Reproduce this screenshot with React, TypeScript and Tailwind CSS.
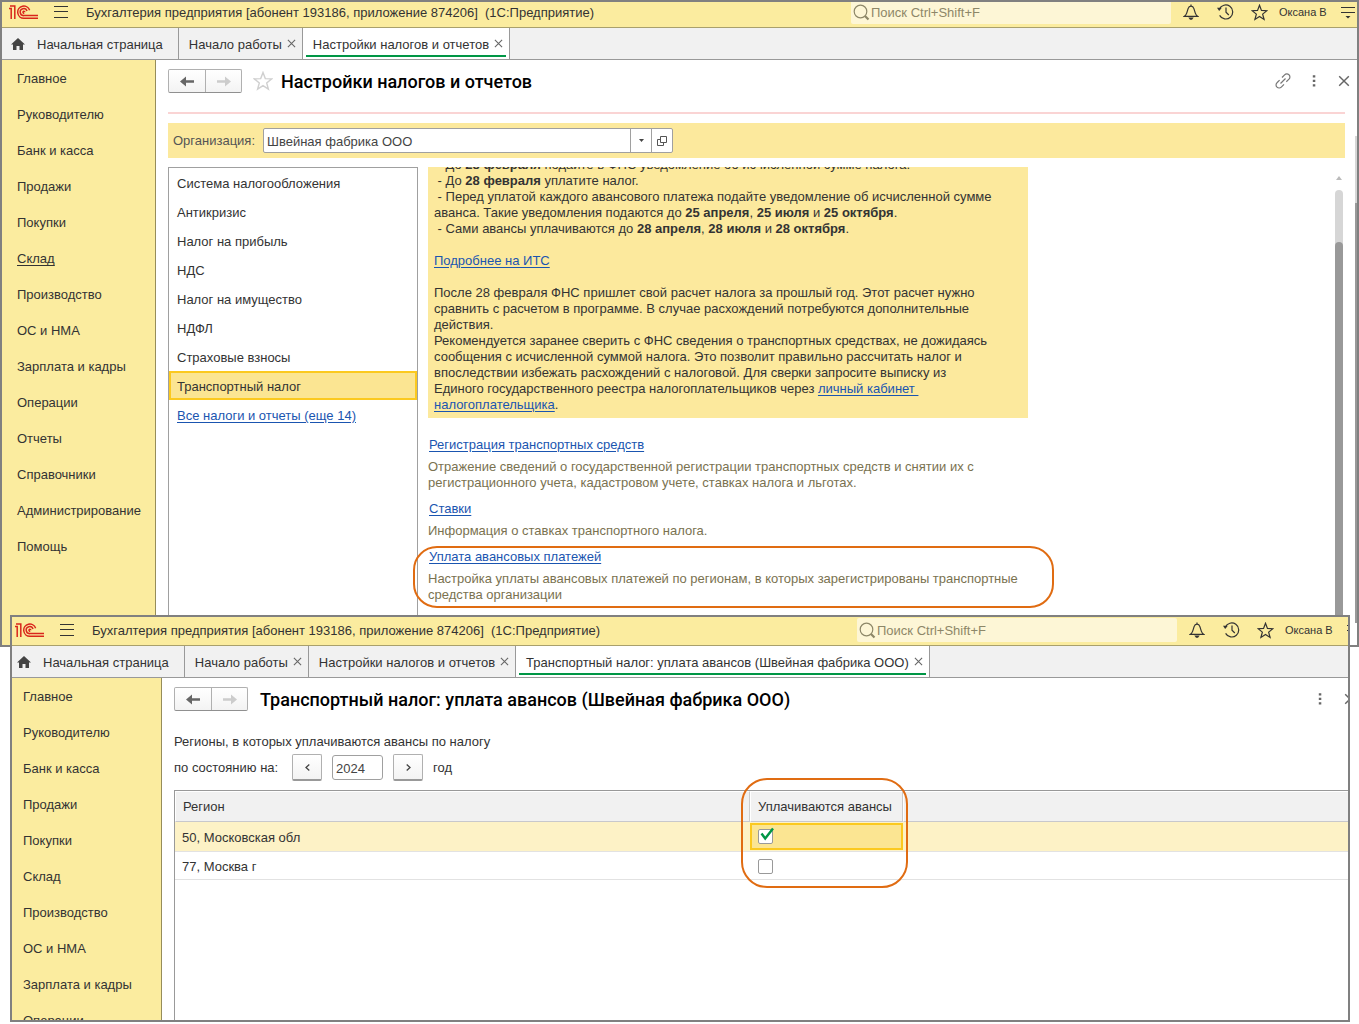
import { useState } from 'react'
import type { ReactNode } from 'react'

const sections = [
  'Главное',
  'Руководителю',
  'Банк и касса',
  'Продажи',
  'Покупки',
  'Склад',
  'Производство',
  'ОС и НМА',
  'Зарплата и кадры',
  'Операции',
  'Отчеты',
  'Справочники',
  'Администрирование',
  'Помощь',
]

const taxes = [
  'Система налогообложения',
  'Антикризис',
  'Налог на прибыль',
  'НДС',
  'Налог на имущество',
  'НДФЛ',
  'Страховые взносы',
  'Транспортный налог',
]

function Logo() {
  return (
    <svg width="30" height="15" viewBox="0 0 30 15" fill="none" stroke="#d9261c" strokeWidth="1.5">
      <path d="M0 3.6h2.2V14M1 1h4.8v13" />
      <path d="M20.6 5.2A6.1 6.1 0 1 0 15 13.3h14" />
      <path d="M18 6A3.5 3.5 0 1 0 15 10.6h14" />
      <path d="M15.8 7.2a.9.9 0 1 0-.6.9" />
    </svg>
  )
}

function BellIcon() {
  return (
    <svg width="16" height="16" viewBox="0 0 16 16" fill="none" stroke="#333" strokeWidth="1.2">
      <path d="M8 .5v1.8M1.2 12.4h13.6c-1.2-.9-2-1.900-2.500-3.300L10.900 4.600C10.400 3 9.400 2.200 8 2.200S5.600 3 5.100 4.600L3.700 9.100c-.5 1.400-1.300 2.400-2.500 3.300z" />
      <path d="M5.300 13.600h5.400L9 15.700H7z" fill="#333" stroke="none" />
    </svg>
  )
}

function HistoryIcon() {
  return (
    <svg width="17" height="16" viewBox="0 0 17 16" fill="none" stroke="#333" strokeWidth="1.2">
      <path d="M2.300 5.200A7 7 0 1 1 2.600 11.400" />
      <path d="M9 3.500v4.700l2.800 2.800" />
      <path d="M0 3.800h4.800L2.200 7z" fill="#333" stroke="none" />
    </svg>
  )
}

function StarIcon({ color, size }: { color: string; size: number }) {
  return (
    <svg width={size} height={size} viewBox="0 0 20 20" fill="none" stroke={color} strokeWidth="1.400">
      <path d="M10 1.500l2.300 6.100 6.400.3-5 4 1.700 6.300-5.400-3.600-5.400 3.600 1.700-6.300-5-4 6.400-.3z" />
    </svg>
  )
}

function CrossIcon({ size }: { size: number }) {
  return (
    <svg width={size} height={size} viewBox="0 0 10 10" stroke="#666" strokeWidth="1.200">
      <path d="M1 1l8 8M9 1L1 9" />
    </svg>
  )
}

function ArrowIcon({ color, flip }: { color: string; flip?: boolean }) {
  return (
    <svg width="14" height="11" viewBox="0 0 14 11" fill={color} className={flip ? 'rotate-180' : ''}>
      <path d="M0 5.500L6 .5v3.700h8v2.600H6v3.700z" />
    </svg>
  )
}

function TitleBar({ searchId }: { searchId: string }) {
  return (
    <header className="flex h-[29px] shrink-0 items-center border-b border-[#a9a06c] bg-[#fbec9f] pr-0.5 pb-0.5 pl-[7px]">
      <Logo />
      <button aria-label="Меню" className="ml-[15px]">
        <svg width="14" height="12" viewBox="0 0 14 12" stroke="#333">
          <path d="M0 .5h14M0 5.500h14M0 11.500h14" />
        </svg>
      </button>
      <h2 className="ml-[18px] pt-0.5 whitespace-pre">
        Бухгалтерия предприятия [абонент 193186, приложение 874206]{'  '}(1С:Предприятие)
      </h2>
      <label htmlFor={searchId} className="ml-auto flex h-6 w-80 items-center rounded-xs bg-[#fdf6d6] pl-0.5">
        <svg width="17" height="17" viewBox="0 0 17 17" fill="none" stroke="#8d8768" strokeWidth="1.200">
          <circle cx="7.500" cy="7.500" r="6.300" />
          <path d="M12 12l3.500 3.500" strokeWidth="2.200" />
        </svg>
        <input
          id={searchId}
          placeholder="Поиск Ctrl+Shift+F"
          className="min-w-0 flex-1 bg-transparent pt-0.5 pl-px outline-none placeholder:text-[#8d8768]"
        />
      </label>
      <button aria-label="Уведомления" className="ml-3">
        <BellIcon />
      </button>
      <button aria-label="История" className="ml-[18px]">
        <HistoryIcon />
      </button>
      <button aria-label="Избранное" className="ml-[17px]">
        <StarIcon color="#333" size={17} />
      </button>
      <button className="ml-[11px] w-[50px] text-left text-[11px] whitespace-nowrap">Оксана В</button>
      <button aria-label="Сервис" className="ml-3">
        <svg width="14" height="13" viewBox="0 0 14 13" stroke="#333">
          <path d="M0 1.500h14M0 6.500h14" />
          <path d="M4.500 10h5L7 12.500z" fill="#333" stroke="none" />
        </svg>
      </button>
    </header>
  )
}

function Tabs({ items }: { items: string[] }) {
  return (
    <nav className="flex h-8 shrink-0 border-b border-[#999] bg-[#f1f1f1]">
      <a href="#home" className="flex items-center gap-3 border-r border-[#999] pr-[15px] pl-[9px]">
        <svg width="14" height="12" viewBox="0 0 14 12" fill="#444">
          <path d="M7 0L0 6.500h2V12h3.500V8h3v4H12V6.500h2z" />
        </svg>
        <span className="pt-0.5">Начальная страница</span>
      </a>
      {items.map((item, i) => {
        const active = i === items.length - 1
        return (
          <div
            key={item}
            className={`relative flex items-center gap-[5px] border-r border-[#999] pr-1.5 pl-2.5 ${active ? 'bg-white' : ''}`}
          >
            <a href="#tab" className="pt-0.5 whitespace-nowrap">{item}</a>
            <button aria-label="Закрыть вкладку">
              <CrossIcon size={9} />
            </button>
            {active && <span className="absolute inset-x-[3px] bottom-[2px] h-0.5 bg-[#009646]" />}
          </div>
        )
      })}
    </nav>
  )
}

function Sidebar({ current }: { current?: string }) {
  return (
    <nav className="w-[154px] shrink-0 border-r border-[#968d5a] bg-[#fbec9f]">
      {sections.map((s) => (
        <a key={s} href="#section" className={`flex h-9 items-center pt-0.5 pl-[15px] ${s === current ? 'underline underline-offset-2' : ''}`}>
          {s}
        </a>
      ))}
    </nav>
  )
}

function PageHeader({ title, star, link }: { title: string; star?: boolean; link?: boolean }) {
  return (
    <div className="flex h-6 items-center">
      <div className="flex h-6 shrink-0 rounded-xs border border-[#b0b0b0] border-b-[#909090] bg-linear-to-b from-white to-[#f3f3f3]">
        <button aria-label="Назад" className="flex w-9 items-center justify-center">
          <ArrowIcon color="#666" />
        </button>
        <button aria-label="Вперед" className="flex w-9 items-center justify-center border-l border-[#b0b0b0]">
          <ArrowIcon color="#ccc" flip />
        </button>
      </div>
      {star && (
        <button aria-label="В избранное" className="-mr-1 ml-[11px]">
          <StarIcon color="#d0d0d0" size={20} />
        </button>
      )}
      <h1 className="ml-3 font-[Roboto,'Liberation_Sans',sans-serif] text-[18px] font-medium whitespace-nowrap text-black">{title}</h1>
      <div className="ml-auto flex items-center">
        {link && (
          <button aria-label="Получить ссылку" className="mr-[21px]">
            <svg width="16" height="16" viewBox="0 0 16 16" fill="none" stroke="#777" strokeWidth="1.200">
              <path d="M7 4.500l2.600-2.700a3 3 0 0 1 4.400 0 3 3 0 0 1 0 4.300l-2.700 2.600" />
              <path d="M9 11.300l-2.700 2.800a3 3 0 0 1-4.300 0 3 3 0 0 1 0-4.400l2.600-2.600M5.500 10.500l5-5" />
            </svg>
          </button>
        )}
        <button aria-label="Еще" className="mr-[22px]">
          <svg width="4" height="12" viewBox="0 0 4 12" fill="#666">
            <path d="M.8.3h2.500v2.300H.8zM.8 4.800h2.500v2.300H.8zM.8 9.300h2.500v2.300H.8z" />
          </svg>
        </button>
        <button aria-label="Закрыть" className="-mr-[5px]">
          <CrossIcon size={12} />
        </button>
      </div>
    </div>
  )
}

function Setting({ title, children, marked }: { title: string; children: ReactNode; marked?: boolean }) {
  return (
    <div className="relative mb-2.5">
      <a href="#setting" className="ml-px text-[#1a55b0] underline underline-offset-2">{title}</a>
      <p className="mt-1.5 text-[#7a7250]">{children}</p>
      {marked && (
        <span className="pointer-events-none absolute -top-[3px] -right-[26px] -bottom-[5px] -left-[15px] rounded-3xl border-2 border-[#e06c12]" />
      )}
    </div>
  )
}

function Link({ children }: { children: ReactNode }) {
  return <a href="#link" className="text-[#1a55b0] underline underline-offset-2">{children}</a>
}

function TaxSettings() {
  const [tax, setTax] = useState('Транспортный налог')
  const [org, setOrg] = useState('Швейная фабрика ООО')

  return (
    <main className="relative flex min-w-0 flex-1 flex-col px-3 pt-[9px]">
      <PageHeader title="Настройки налогов и отчетов" star link />
      <div className="mt-[19px] h-0.5 shrink-0 bg-[#fad4d4]" />

      <div className="mt-[9px] flex h-[35px] shrink-0 items-center bg-[#fce99d] pl-[5px]">
        <label htmlFor="org" className="w-[90px] text-[#555]">Организация:</label>
        <div className="flex h-[25px] w-[410px] rounded-xs border border-[#a0a0a0] bg-white">
          <input
            id="org"
            value={org}
            onChange={(e) => setOrg(e.target.value)}
            className="min-w-0 flex-1 pt-0.5 pl-[3px] text-[#444] outline-none"
          />
          <button aria-label="Выбрать" className="flex w-[21px] items-center justify-center border-l border-[#a0a0a0]">
            <svg width="5" height="3" viewBox="0 0 5 3" fill="#444">
              <path d="M0 0h5L2.500 3z" />
            </svg>
          </button>
          <button aria-label="Открыть" className="flex w-[21px] items-center justify-center border-l border-[#a0a0a0]">
            <svg width="10" height="10" viewBox="0 0 10 10" fill="none" stroke="#555">
              <path d="M3.500.5h6v6h-6zM3 3.500H.5v6h6V7" />
            </svg>
          </button>
        </div>
      </div>

      <div className="mt-[9px] flex min-h-0 flex-1">
        <div className="w-[250px] shrink-0 border border-b-0 border-[#a0a0a0]">
          {taxes.map((t) => (
            <button
              key={t}
              onClick={() => setTax(t)}
              className={`flex h-[29px] w-full items-center border-2 pt-0.5 pl-1.5 ${t === tax ? 'border-[#fbc91f] bg-[#fbe592]' : 'border-transparent'}`}
            >
              {t}
            </button>
          ))}
          <div className="flex h-[29px] items-center pt-0.5 pl-2">
            <Link>Все налоги и отчеты (еще 14)</Link>
          </div>
        </div>

        <div className="ml-2.5 w-[600px] leading-4">
          <div className="mb-[19px] flex h-[251px] flex-col justify-end overflow-hidden bg-[#fce99d] pr-6 pb-[5px] pl-1.5">
            <div className="shrink-0 whitespace-pre">
              <p>{' - До '}<b>28 февраля</b> подайте в ФНС уведомление об исчисленной сумме налога.</p>
              <p>{' - До '}<b>28 февраля</b> уплатите налог.</p>
              <p>{' - Перед уплатой каждого авансового платежа подайте уведомление об исчисленной сумме'}</p>
              <p>аванса. Такие уведомления подаются до <b>25 апреля</b>, <b>25 июля</b> и <b>25 октября</b>.</p>
              <p>{' - Сами авансы уплачиваются до '}<b>28 апреля</b>, <b>28 июля</b> и <b>28 октября</b>.</p>
              <p className="my-4"><Link>Подробнее на ИТС</Link></p>
              <p>После 28 февраля ФНС пришлет свой расчет налога за прошлый год. Этот расчет нужно</p>
              <p>сравнить с расчетом в программе. В случае расхождений потребуются дополнительные</p>
              <p>действия.</p>
              <p>Рекомендуется заранее сверить с ФНС сведения о транспортных средствах, не дожидаясь</p>
              <p>сообщения с исчисленной суммой налога. Это позволит правильно рассчитать налог и</p>
              <p>впоследствии избежать расхождений с налоговой. Для сверки запросите выписку из</p>
              <p>Единого государственного реестра налогоплательщиков через <Link>{'личный кабинет '}</Link></p>
              <p><Link>налогоплательщика</Link>.</p>
            </div>
          </div>
          <Setting title="Регистрация транспортных средств">
            Отражение сведений о государственной регистрации транспортных средств и снятии их с
            регистрационного учета, кадастровом учете, ставках налога и льготах.
          </Setting>
          <Setting title="Ставки">Информация о ставках транспортного налога.</Setting>
          <Setting title="Уплата авансовых платежей" marked>
            Настройка уплаты авансовых платежей по регионам, в которых зарегистрированы транспортные
            средства организации
          </Setting>
        </div>

        <div className="mr-0.5 ml-auto flex w-2 flex-col items-center pt-[9px]">
          <svg width="6" height="4" viewBox="0 0 6 4" fill="#bbb">
            <path d="M3 0l3 4H0z" />
          </svg>
          <div className="mt-2.5 flex w-2 flex-1 flex-col rounded-t-full bg-[#d6d6d6] pt-[52px]">
            <div className="flex-1 rounded-t-full bg-[#999]" />
          </div>
        </div>
      </div>

      {/* form scrollbar, half hidden by the window edge */}
      <div className="absolute top-[76px] right-0 bottom-[22px] w-0.5 bg-[#d6d6d6] pt-[67px]">
        <div className="h-full bg-[#999]" />
      </div>
    </main>
  )
}

function Check({ label, checked, onChange }: { label: string; checked: boolean; onChange: () => void }) {
  return (
    <label className="relative block size-[15px]">
      <input
        type="checkbox"
        aria-label={label}
        checked={checked}
        onChange={onChange}
        className="block size-[15px] appearance-none rounded-xs border border-[#999] bg-white"
      />
      {checked && (
        <svg width="14" height="14" viewBox="0 0 14 14" fill="none" stroke="#009646" strokeWidth="2.400" className="absolute -top-0.5 left-0.5">
          <path d="M1.500 6.500l3.700 5L13 1.500" />
        </svg>
      )}
    </label>
  )
}

function AdvancePayments() {
  const [year, setYear] = useState(2024)
  const [moscowRegion, setMoscowRegion] = useState(true)
  const [moscow, setMoscow] = useState(false)

  const stepButton =
    'flex h-[27px] w-[30px] items-center justify-center rounded-xs border border-[#b0b0b0] border-b-2 border-b-[#999] bg-linear-to-b from-white to-[#f3f3f3]'

  return (
    <main className="flex min-w-0 flex-1 flex-col pt-[9px] pl-3">
      <div className="pr-3">
        <PageHeader title="Транспортный налог: уплата авансов (Швейная фабрика ООО)" />
      </div>
      <p className="mt-[23px] leading-4">Регионы, в которых уплачиваются авансы по налогу</p>
      <div className="mt-1 flex items-center">
        <label htmlFor="year" className="w-[118px]">по состоянию на:</label>
        <button aria-label="Предыдущий год" className={stepButton} onClick={() => setYear(year - 1)}>
          <svg width="5" height="7" viewBox="0 0 5 7" fill="none" stroke="#444" strokeWidth="1.300">
            <path d="M4.300.5l-3.300 3 3.300 3" />
          </svg>
        </button>
        <input
          id="year"
          value={year}
          onChange={(e) => setYear(Number(e.target.value))}
          className="mx-2.5 h-[25px] w-[51px] rounded-[3px] border border-[#a0a0a0] pt-0.5 pl-[3px] text-[#444] outline-none"
        />
        <button aria-label="Следующий год" className={stepButton} onClick={() => setYear(year + 1)}>
          <svg width="5" height="7" viewBox="0 0 5 7" fill="none" stroke="#444" strokeWidth="1.300">
            <path d="M.7.5l3.300 3-3.300 3" />
          </svg>
        </button>
        <span className="ml-2.5">год</span>
      </div>

      <div className="mt-[9px] flex-1 border-t border-l border-[#999]">
        <table className="w-full table-fixed border-separate border-spacing-0 text-left">
          <thead>
            <tr className="h-[31px]">
              <th className="w-[575px] border border-white border-r-[#ccc] border-b-[#c8c8cc] bg-[#f1f1f1] pl-[7px] font-normal">Регион</th>
              <th className="relative w-[153px] border border-white border-r-[#ccc] border-b-[#c8c8cc] bg-[#f1f1f1] pl-[7px] font-normal whitespace-nowrap">
                Уплачиваются авансы
                <span className="pointer-events-none absolute -top-3.5 -right-1.5 -left-2.5 z-10 h-[110px] rounded-[26px] border-2 border-[#e06c12]" />
              </th>
              <th aria-label="Прочее" className="border border-white border-b-[#c8c8cc] bg-[#f1f1f1]" />
            </tr>
          </thead>
          <tbody>
            <tr className="h-[30px] bg-[#fdf2c6]">
              <td className="border-b border-[#e2e2e2] pt-0.5 pl-[7px]">50, Московская обл</td>
              <td className="border-b border-[#e2e2e2] p-0">
                <div className="flex h-[27px] items-center border-2 border-[#fbc91f] bg-[#fbe592] pl-1.5">
                  <Check label="50, Московская обл" checked={moscowRegion} onChange={() => setMoscowRegion(!moscowRegion)} />
                </div>
              </td>
              <td className="border-b border-[#e2e2e2]" />
            </tr>
            <tr className="h-7">
              <td className="border-b border-[#e2e2e2] pt-0.5 pl-[7px]">77, Москва г</td>
              <td className="border-b border-[#e2e2e2] p-0 pt-0.5 pl-2">
                <Check label="77, Москва г" checked={moscow} onChange={() => setMoscow(!moscow)} />
              </td>
              <td className="border-b border-[#e2e2e2]" />
            </tr>
          </tbody>
        </table>
      </div>
    </main>
  )
}

export default function App() {
  return (
    <div className="flex h-screen flex-col overflow-hidden bg-white font-['Liberation_Sans',Arial,sans-serif] text-[13px] text-[#333]">
      <section className="h-[647px] shrink-0 overflow-hidden border-2 border-[#808080] bg-white">
        <div className="-mt-[3px] flex h-[646px] flex-col">
          <TitleBar searchId="search-settings" />
          <Tabs items={['Начало работы', 'Настройки налогов и отчетов']} />
          <div className="flex min-h-0 flex-1">
            <Sidebar current="Склад" />
            <TaxSettings />
          </div>
        </div>
      </section>

      {/* second window lies over the bottom of the first one */}
      <section className="z-10 -mt-8 mr-[9px] mb-0.5 ml-2.5 flex min-h-0 flex-1 overflow-hidden border-2 border-[#808080] bg-white">
        <div className="-mr-[15px] -ml-1 flex min-w-0 flex-1 flex-col">
          <TitleBar searchId="search-advances" />
          <Tabs items={['Начало работы', 'Настройки налогов и отчетов', 'Транспортный налог: уплата авансов (Швейная фабрика ООО)']} />
          <div className="flex min-h-0 flex-1">
            <Sidebar />
            <AdvancePayments />
          </div>
        </div>
      </section>
    </div>
  )
}
